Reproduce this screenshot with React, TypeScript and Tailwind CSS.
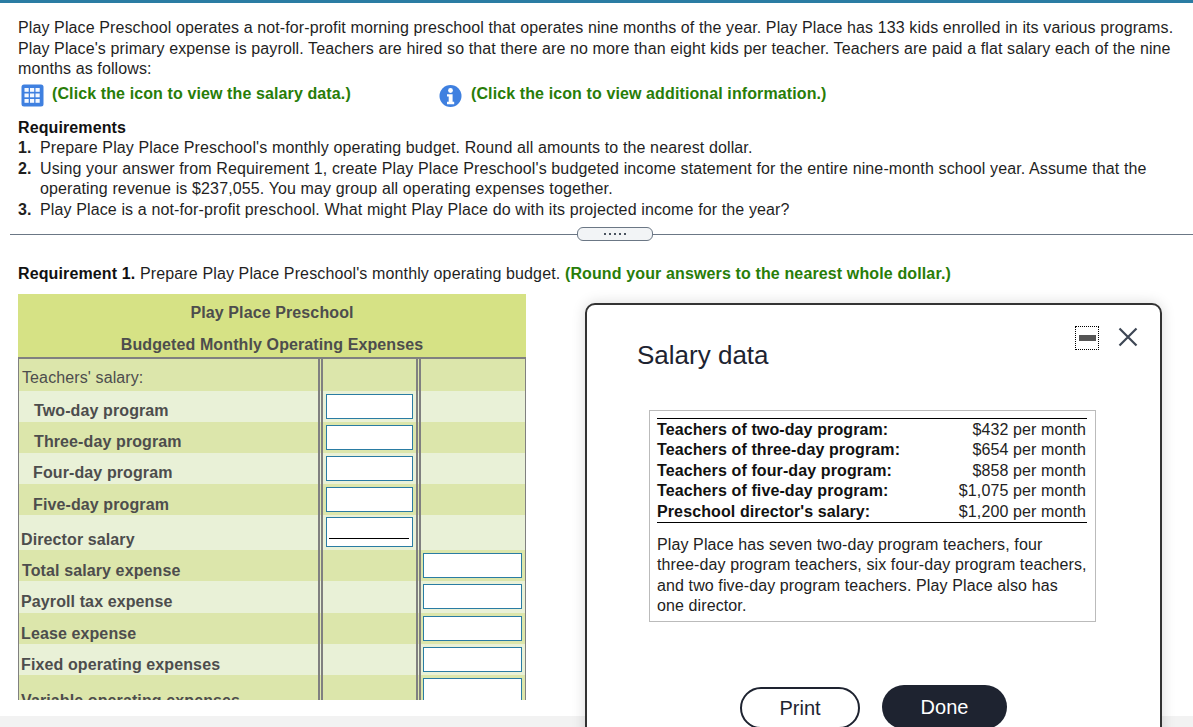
import React from 'react';

const rows = [
  { label: "Teachers' salary:", h: 'h-[32px]', dark: true, text: 'pl-[3px] pt-[7px] font-normal' },
  { label: 'Two-day program', h: 'h-[31px]', dark: false, text: 'pl-[15px] pt-[10px]', input: 1 },
  { label: 'Three-day program', h: 'h-[31px]', dark: true, text: 'pl-[15px] pt-[10px]', input: 1 },
  { label: 'Four-day program', h: 'h-[31px]', dark: false, text: 'pl-[14px] pt-[10px]', input: 1 },
  { label: 'Five-day program', h: 'h-[31px]', dark: true, text: 'pl-[14px] pt-[13px]', input: 1 },
  { label: 'Director salary', h: 'h-[35px]', dark: false, text: 'pl-[2px] pt-[17px]', input: 1, underline: true },
  { label: 'Total salary expense', h: 'h-[31px]', dark: true, text: 'pl-[3px] pt-[13px]', input: 2 },
  { label: 'Payroll tax expense', h: 'h-[32px]', dark: false, text: 'pl-[2px] pt-[11px]', input: 2 },
  { label: 'Lease expense', h: 'h-[31px]', dark: true, text: 'pl-[2px] pt-[13px]', input: 2 },
  { label: 'Fixed operating expenses', h: 'h-[31px]', dark: false, text: 'pl-[2px] pt-[13px]', input: 2 },
  { label: 'Variable operating expenses', h: 'h-[35px]', dark: true, text: 'pl-[2px] pt-[19px]', input: 2 },
];

const salaries = [
  ['Teachers of two-day program:', '$432 per month'],
  ['Teachers of three-day program:', '$654 per month'],
  ['Teachers of four-day program:', '$858 per month'],
  ['Teachers of five-day program:', '$1,075 per month'],
  ["Preschool director's salary:", '$1,200 per month'],
];

const GridIcon = () => (
  <svg width="23" height="23" viewBox="0 0 23 23">
    <rect x="0.5" y="0.5" width="22" height="22" rx="2.5" fill="#3f80e0" />
    {[4, 9.5, 15].map((y) =>
      [3.5, 9, 14.5].map((x) => <rect key={`${x}-${y}`} x={x} y={y} width="4.2" height="3.8" fill="#f4f8ff" />)
    )}
  </svg>
);

const InfoIcon = () => (
  <svg width="23" height="24" viewBox="0 0 23 24">
    <circle cx="11.5" cy="12" r="11" fill="#3f80e0" />
    <circle cx="11.5" cy="6.5" r="2.4" fill="#fff" />
    <path d="M8 10.2h5.6v7.6h1.6v2.4H8v-2.4h1.7v-5.2H8z" fill="#fff" />
  </svg>
);

const Box = ({ h = 'h-[25px]', w, underline }: { h?: string; w: string; underline?: boolean }) => (
  <div className={`${h} ${w} bg-white border border-[#2a7ca3] relative`}>
    {underline && <div className="absolute left-[2px] right-[3px] bottom-[7px] h-px bg-black" />}
  </div>
);

export default function App() {
  return (
    <div className="relative w-[1193px] h-[727px] overflow-hidden bg-white text-[16px] leading-[20.5px] tracking-[0.11px] text-[#1f1f1f] font-['Liberation_Sans',Arial,sans-serif]">
      <div className="h-[3px] bg-[#2a7ca3]" />

      <div className="pl-[18px] pr-[10px] pt-[15px]">
        <p>
          Play Place Preschool operates a not-for-profit morning preschool that operates nine months of the year. Play Place has 133 kids enrolled in its various programs.
          <br />
          Play Place's primary expense is payroll. Teachers are hired so that there are no more than eight kids per teacher. Teachers are paid a flat salary each of the nine
          <br />
          months as follows:
        </p>
        <div className="flex items-center mt-[4px] h-[24px] font-bold text-[#287d08]">
          <div className="w-[421px] flex items-center gap-[8px] pl-[3px]">
            <GridIcon />
            <span className="-mt-[3px]">(Click the icon to view the salary data.)</span>
          </div>
          <div className="flex items-center gap-[9px]">
            <InfoIcon />
            <span className="-mt-[3px]">(Click the icon to view additional information.)</span>
          </div>
        </div>

        <div className="mt-[10px] font-bold text-[#111]">Requirements</div>
        <ol className="tracking-[0.125px]">
          <li className="flex">
            <b className="w-[22px] shrink-0">1.</b>
            <span>Prepare Play Place Preschool's monthly operating budget. Round all amounts to the nearest dollar.</span>
          </li>
          <li className="flex">
            <b className="w-[22px] shrink-0">2.</b>
            <span>
              Using your answer from Requirement 1, create Play Place Preschool's budgeted income statement for the entire nine-month school year. Assume that the
              <br />
              operating revenue is $237,055. You may group all operating expenses together.
            </span>
          </li>
          <li className="flex">
            <b className="w-[22px] shrink-0">3.</b>
            <span>Play Place is a not-for-profit preschool. What might Play Place do with its projected income for the year?</span>
          </li>
        </ol>
      </div>

      <div className="ml-[10px] mt-[7px] h-[14px] flex items-center">
        <div className="w-[567px] h-px bg-[#6b7785]" />
        <div className="w-[76px] h-[14px] rounded-[6px] border border-[#6b7785] bg-[#f2f4f6] flex items-center justify-center gap-[3px]">
          {[0, 1, 2, 3, 4].map((i) => (
            <span key={i} className="w-[2px] h-[2px] bg-[#4a5360]" />
          ))}
        </div>
        <div className="flex-1 h-px bg-[#6b7785]" />
      </div>

      <div className="pl-[18px] mt-[23px] tracking-[0.13px]">
        <span className="font-bold text-[#111]">Requirement 1.</span> Prepare Play Place Preschool's monthly operating budget.{' '}
        <span className="font-bold text-[#287d08]">(Round your answers to the nearest whole dollar.)</span>
      </div>

      <div className="ml-[18px] mt-[9px] w-[508px] h-[406px] overflow-hidden font-bold text-[#4d4d4d]">
        <div className="h-[65px] bg-[#d6e285] border-b-2 border-[#808080] flex flex-col items-center">
          <div className="mt-[9px]">Play Place Preschool</div>
          <div className="mt-[12px]">Budgeted Monthly Operating Expenses</div>
        </div>
        <div className="border-x border-[#808080]">
          {rows.map((r) => (
            <div key={r.label} className={`${r.h} ${r.dark ? 'bg-[#dce6ab]' : 'bg-[#e9f1d7]'} flex`}>
              <div className={`w-[299px] shrink-0 flex items-center ${r.text}`}>{r.label}</div>
              <div className="w-[103px] shrink-0 border-x-[5px] border-double border-[#808080] flex items-center justify-center">
                {r.input === 1 && <Box w="w-[87px]" h={r.underline ? 'h-[30px]' : 'h-[25px]'} underline={r.underline} />}
              </div>
              <div className="flex-1 flex items-center justify-center pr-[2px]">
                {r.input === 2 && <Box w="w-[99px]" h={r.label.startsWith('Variable') ? 'h-[28px]' : 'h-[25px]'} />}
              </div>
            </div>
          ))}
        </div>
      </div>

      <div className="absolute left-0 right-0 bottom-0 h-[11px] bg-[#f2f2f2]" />

      <div className="absolute left-[585px] top-[303px] w-[577px] h-[460px] bg-white border-2 border-[#333] rounded-[10px] shadow-[0_0_14px_rgba(0,0,0,0.15)]">
        <div className="absolute left-[488px] top-[21px] w-[24px] h-[24px] border border-dotted border-black flex items-center justify-center">
          <div className="w-[17px] h-[6px] bg-[#555]" />
        </div>
        <svg className="absolute left-[530px] top-[21px]" width="22" height="22" viewBox="0 0 22 22">
          <path d="M2.5 2.5l17 17M19.5 2.5l-17 17" stroke="#3d4654" strokeWidth="2.2" fill="none" />
        </svg>

        <div className="pl-[50px] pt-[34px] text-[26px] leading-[32px] tracking-normal text-[#1d2330]">Salary data</div>

        <div className="ml-[62px] mt-[39px] w-[447px] h-[212px] border border-[#bbb] pl-[7px] pr-[8px] pt-[7px] text-[#222]">
          <div className="border-y border-black pt-[1px] pr-[1px]">
            {salaries.map(([k, v]) => (
              <div key={k} className="flex justify-between h-[20.4px] leading-[20.4px]">
                <b className="text-[#111]">{k}</b>
                <span>{v}</span>
              </div>
            ))}
          </div>
          <p className="mt-[12px] leading-[20.3px]">
            Play Place has seven two-day program teachers, four
            <br />
            three-day program teachers, six four-day program teachers,
            <br />
            and two five-day program teachers. Play Place also has
            <br />
            one director.
          </p>
        </div>

        <div className="flex items-start ml-[153px] mt-[63px] text-[20px] tracking-normal">
          <button className="w-[120px] h-[42px] mt-[2px] rounded-full border-2 border-[#1e2330] text-[#1e2330] flex items-center justify-center">
            Print
          </button>
          <button className="ml-[22px] w-[125px] h-[44px] rounded-full bg-[#1e2330] text-white flex items-center justify-center">
            Done
          </button>
        </div>
      </div>
    </div>
  );
}
